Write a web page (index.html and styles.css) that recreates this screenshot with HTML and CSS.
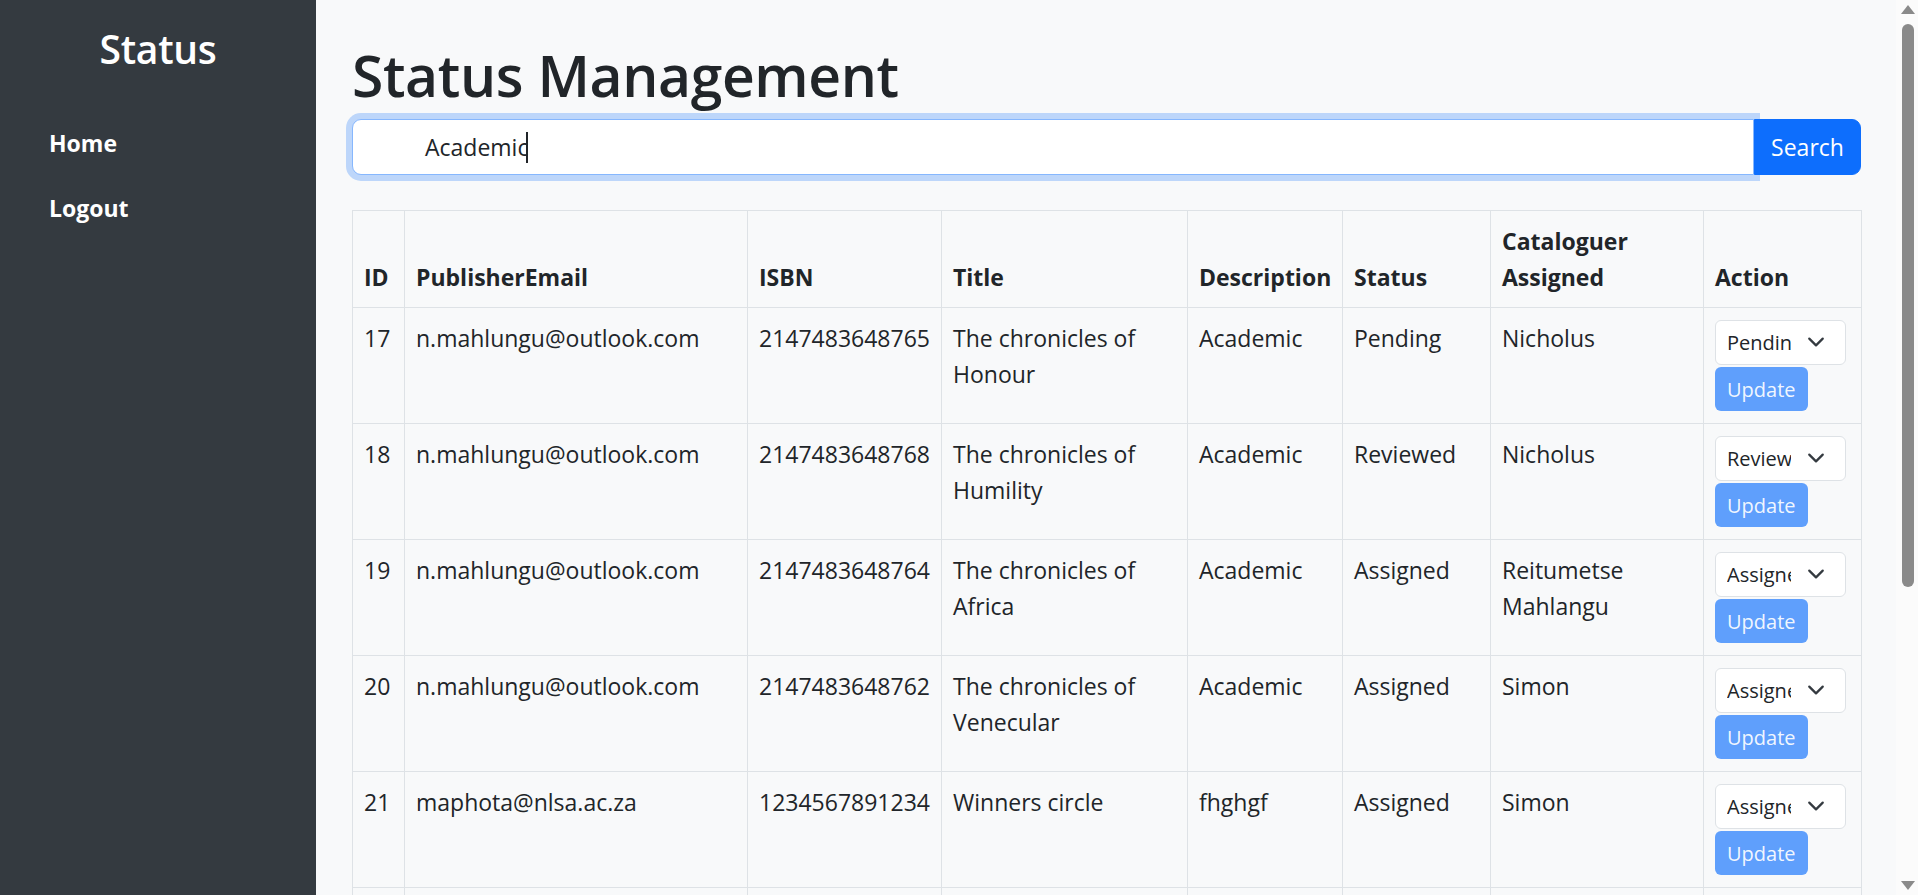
FILE: index.html
```html
<!DOCTYPE html>
<html lang="en">
<head>
<meta charset="utf-8">
<title>Status Management</title>
<link rel="stylesheet" href="styles.css">
</head>
<body>
<div class="layout">
  <aside class="sidebar">
    <h3 class="sidebar-title">Status</h3>
    <nav class="side-nav">
      <a class="side-link" href="#">Home</a>
      <a class="side-link" href="#">Logout</a>
    </nav>
  </aside>
  <main class="main">
    <div class="content">
      <h1 class="page-title">Status Management</h1>
      <form class="search-group">
        <div class="search-input"><span class="search-text">Academic</span><span class="caret"></span></div>
        <button class="search-btn" type="button">Search</button>
      </form>
      <table class="data-table">
        <colgroup>
          <col class="c-id"><col class="c-email"><col class="c-isbn"><col class="c-title"><col class="c-desc"><col class="c-status"><col class="c-cat"><col class="c-action">
        </colgroup>
        <thead>
          <tr><th>ID</th><th>PublisherEmail</th><th>ISBN</th><th>Title</th><th>Description</th><th>Status</th><th>Cataloguer Assigned</th><th>Action</th></tr>
        </thead>
        <tbody>
          <tr><td>17</td><td>n.mahlungu@outlook.com</td><td>2147483648765</td><td>The chronicles of Honour</td><td>Academic</td><td>Pending</td><td>Nicholus</td>
            <td><div class="select-wrap"><select class="status-select"><option>Pending</option><option>Reviewed</option><option>Assigned</option></select><svg class="chev" viewBox="0 0 16 16"><path d="m2 5 6 6 6-6"/></svg></div><button class="update-btn" type="button">Update</button></td></tr>
          <tr><td>18</td><td>n.mahlungu@outlook.com</td><td>2147483648768</td><td>The chronicles of Humility</td><td>Academic</td><td>Reviewed</td><td>Nicholus</td>
            <td><div class="select-wrap"><select class="status-select"><option>Reviewed</option><option>Pending</option><option>Assigned</option></select><svg class="chev" viewBox="0 0 16 16"><path d="m2 5 6 6 6-6"/></svg></div><button class="update-btn" type="button">Update</button></td></tr>
          <tr><td>19</td><td>n.mahlungu@outlook.com</td><td>2147483648764</td><td>The chronicles of Africa</td><td>Academic</td><td>Assigned</td><td>Reitumetse Mahlangu</td>
            <td><div class="select-wrap"><select class="status-select"><option>Assigned</option><option>Pending</option><option>Reviewed</option></select><svg class="chev" viewBox="0 0 16 16"><path d="m2 5 6 6 6-6"/></svg></div><button class="update-btn" type="button">Update</button></td></tr>
          <tr><td>20</td><td>n.mahlungu@outlook.com</td><td>2147483648762</td><td>The chronicles of Venecular</td><td>Academic</td><td>Assigned</td><td>Simon</td>
            <td><div class="select-wrap"><select class="status-select"><option>Assigned</option><option>Pending</option><option>Reviewed</option></select><svg class="chev" viewBox="0 0 16 16"><path d="m2 5 6 6 6-6"/></svg></div><button class="update-btn" type="button">Update</button></td></tr>
          <tr><td>21</td><td>maphota@nlsa.ac.za</td><td>1234567891234</td><td>Winners circle</td><td>fhghgf</td><td>Assigned</td><td>Simon</td>
            <td><div class="select-wrap"><select class="status-select"><option>Assigned</option><option>Pending</option><option>Reviewed</option></select><svg class="chev" viewBox="0 0 16 16"><path d="m2 5 6 6 6-6"/></svg></div><button class="update-btn" type="button">Update</button></td></tr>
          <tr class="next-row"><td></td><td></td><td></td><td></td><td></td><td></td><td></td><td></td></tr>
        </tbody>
      </table>
    </div>
  </main>
</div>
<div class="fake-scrollbar" aria-hidden="true">
  <span class="sb-arrow sb-up"></span>
  <span class="sb-thumb"></span>
  <span class="sb-arrow sb-down"></span>
</div>
</body>
</html>
```
FILE: styles.css
```css
* { box-sizing: border-box; }
html, body { margin: 0; padding: 0; }
body {
  font-family: "Open Sans", "Noto Sans", "Liberation Sans", sans-serif;
  font-size: 23px;
  line-height: 36px;
  color: #212529;
  background: #f8f9fa;
}
.layout { display: flex; min-height: 100vh; align-items: stretch; }
.sidebar {
  flex: 0 0 316px;
  width: 316px;
  background: #343a40;
  color: #fff;
  min-height: 100vh;
}
.sidebar-title {
  margin: 0;
  padding-top: 25px;
  font-size: 39px;
  line-height: 48px;
  font-weight: 600;
  text-align: center;
  letter-spacing: -0.3px;
}
.side-nav { display: flex; flex-direction: column; margin-top: 37px; }
.side-link {
  display: block;
  padding: 14.5px 49px;
  line-height: 36px;
  color: #fff;
  font-weight: 700;
  text-decoration: none;
  font-size: 23px;
}
.main { flex: 1 1 auto; padding: 42px 57px 40px 36px; }
.content { max-width: 1509px; }
.page-title {
  margin: 0 0 10px;
  font-size: 57px;
  line-height: 67px;
  font-weight: 600;
  letter-spacing: -0.4px;
}
.search-group { display: flex; margin: 0 0 35px; }
.search-input {
  flex: 1 1 auto;
  display: flex;
  align-items: center;
  height: 56px;
  padding: 0 18px 0 72px;
  font-size: 23px;
  color: #212529;
  background: #fff;
  border: 1.5px solid #86b7fe;
  border-radius: 9px 0 0 9px;
  box-shadow: 0 0 0 6px rgba(13, 110, 253, 0.25);
}
.caret {
  display: inline-block;
  width: 2px;
  height: 31px;
  margin-left: -2px;
  background: #212529;
}
.search-btn {
  flex: 0 0 107px;
  width: 107px;
  height: 56px;
  font: inherit;
  font-size: 23px;
  color: #fff;
  background: #0d6efd;
  border: 1.5px solid #0d6efd;
  border-radius: 0 9px 9px 0;
  padding: 0;
  position: relative;
}
.data-table {
  width: 1509px;
  table-layout: fixed;
  border-collapse: collapse;
}
.c-id { width: 52px; }
.c-email { width: 343px; }
.c-isbn { width: 194px; }
.c-title { width: 246px; }
.c-desc { width: 155px; }
.c-status { width: 148px; }
.c-cat { width: 213px; }
.c-action { width: 158px; }
.data-table th, .data-table td {
  border: 1px solid #dee2e6;
  padding: 12px 11px;
  text-align: left;
}
.data-table th { vertical-align: bottom; font-weight: 700; white-space: nowrap; }
.data-table th:nth-child(7) { white-space: normal; }
.data-table td { vertical-align: top; }
.next-row td { height: 116px; }
.select-wrap { position: relative; width: 131px; height: 45px; margin-bottom: 2px; }
.status-select {
  appearance: none;
  -webkit-appearance: none;
  width: 131px;
  height: 45px;
  padding: 0 54px 0 11px;
  font-family: inherit;
  font-size: 20px;
  color: #212529;
  background: #fff;
  border: 1.5px solid #dee2e6;
  border-radius: 6px;
}
.chev {
  position: absolute;
  right: 18px;
  top: 13px;
  width: 24px;
  height: 18px;
  fill: none;
  stroke: #343a40;
  stroke-width: 2;
  stroke-linecap: round;
  stroke-linejoin: round;
  pointer-events: none;
}
.update-btn {
  display: block;
  height: 44px;
  padding: 0 12px;
  font-family: inherit;
  font-size: 20px;
  color: rgba(255, 255, 255, 0.92);
  background: #5f9ffc;
  border: 0;
  border-radius: 6px;
}
.fake-scrollbar {
  position: fixed;
  top: 0;
  right: 0;
  width: 22px;
  height: 100vh;
  background: #fbfbfb;
}
.sb-thumb {
  position: absolute;
  left: 6px;
  top: 24px;
  width: 12px;
  height: 563px;
  background: #8a8a8a;
  border-radius: 6px;
}
.sb-arrow {
  position: absolute;
  left: 5px;
  width: 0;
  height: 0;
  border-left: 7px solid transparent;
  border-right: 7px solid transparent;
}
.sb-up { top: 5px; border-bottom: 9px solid #8a8a8a; }
.sb-down { bottom: 5px; border-top: 9px solid #8a8a8a; }
```
